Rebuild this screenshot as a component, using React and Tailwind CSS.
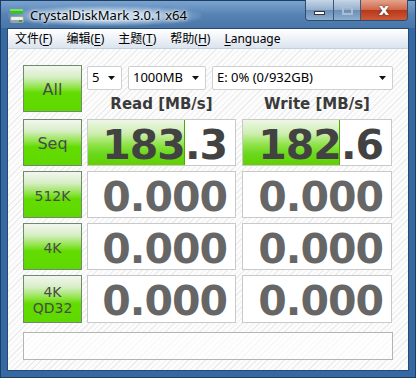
import React from "react";

const rows = [
  { label: ["Seq"], read: "183.3", write: "182.6", readBar: 97, writeBar: 97, big: true },
  { label: ["512K"], read: "0.000", write: "0.000" },
  { label: ["4K"], read: "0.000", write: "0.000" },
  { label: ["4K", "QD32"], read: "0.000", write: "0.000" },
];

const btnBg =
  "bg-[linear-gradient(to_bottom,#f4f6f0_0%,#d6eec4_25%,#8ee445_48%,#62dc00_60%,#5fd800_100%)]";

function TestButton({ lines, big, h = "h-[47px]" }) {
  return (
    <div
      className={`w-[59px] ${h} shrink-0 border border-[#6f8a6c] ${btnBg} flex flex-col items-center justify-center text-[#4a4a4a] leading-[16px] pt-[2px]`}
      style={{ fontFamily: '"DejaVu Sans", sans-serif' }}
    >
      {lines.map((l) => (
        <span key={l} className={big ? "text-[16px]" : "text-[14px]"}>
          {l}
        </span>
      ))}
    </div>
  );
}

function ValueBox({ value, bar, w, h = "h-[47px]" }) {
  return (
    <div className={`relative ${w} ${h} shrink-0 border border-[#c9c9c9] bg-white`}>
      {bar ? (
        <div
          className="absolute left-0 top-0 bottom-0 border-r border-[#4fa800] bg-[linear-gradient(to_bottom,#eef7e6_0%,#cdeeb0_30%,#8fe348_55%,#6ad81c_75%,#62d000_100%)]"
          style={{ width: bar }}
        />
      ) : null}
      <div
        className={`relative h-full flex items-center justify-end pr-[8px] pt-[4px] text-[41px] font-bold leading-[46px] tracking-[-1px] ${bar ? "text-[#424242]" : "text-[#666666]"}`}
        style={{ fontFamily: '"DejaVu Sans", sans-serif' }}
      >
        {value}
      </div>
    </div>
  );
}

function Select({ text, w }) {
  return (
    <div className={`${w} h-[24px] shrink-0 border border-[#cfcfcf] bg-white rounded-[2px] flex items-center justify-between pl-[4px] pr-[5px] text-[13px] text-black`}>
      <span>{text}</span>
      <svg width="8" height="5" viewBox="0 0 8 5">
        <path d="M0 0h7L3.5 4z" fill="#111" />
      </svg>
    </div>
  );
}

function DiskIcon() {
  return (
    <svg width="16" height="16" viewBox="0 0 16 16">
      <rect x="1" y="1" width="13" height="5" rx="1" fill="#3fbf2a" />
      <rect x="1" y="1" width="13" height="2" fill="#7ee060" />
      <rect x="1" y="8" width="14" height="7" rx="2" fill="#9aa3a8" />
      <rect x="2" y="9" width="12" height="3" rx="1" fill="#e9eef0" />
      <rect x="10" y="12" width="3" height="2" fill="#3fa020" />
    </svg>
  );
}

function Mnemonic({ pre, key1, post }) {
  return (
    <span>
      {pre}
      <span className="underline underline-offset-2">{key1}</span>
      {post}
    </span>
  );
}

export default function App() {
  return (
    <div
      className="w-[416px] h-[378px] border border-[#1e3d60] bg-[#3569a3] flex flex-col px-[6px] pb-[6px]"
      style={{ fontFamily: '"Noto Sans", "Noto Sans CJK SC", sans-serif' }}
    >
      {/* title bar */}
      <div className="h-[27px] -mx-[6px] px-[7px] flex items-start bg-[linear-gradient(to_bottom,#7aa3cf,#5783b4_50%,#4876a8)]">
        <div className="flex items-center gap-[5px] mt-[5px] px-[1px] bg-[radial-gradient(ellipse_at_center,rgba(210,228,245,0.85)_30%,rgba(210,228,245,0)_75%)] pr-[14px]">
          <DiskIcon />
          <span className="text-[13px] text-black [text-shadow:0_0_6px_#fff,0_0_3px_#fff]">
            CrystalDiskMark 3.0.1 x64
          </span>
        </div>
        <div className="ml-auto -mt-[1px] flex h-[21px] rounded-b-[4px] border border-t-0 border-[#2c4c70] overflow-hidden">
          <div className="w-[28px] flex items-center justify-center border-r border-[#39597d] bg-[linear-gradient(to_bottom,#c6d6e6,#93afcd_50%,#6c8eb4_51%,#8eaecf)]">
            <div className="w-[11px] h-[4px] bg-white border border-[#334] mt-[5px]" />
          </div>
          <div className="w-[27px] flex items-center justify-center border-r border-[#39597d] bg-[linear-gradient(to_bottom,#c6d6e6,#93afcd_50%,#6c8eb4_51%,#8eaecf)]">
            <div className="w-[11px] h-[9px] border-[2px] border-[#a9bdd3]" />
          </div>
          <div className="w-[46px] flex items-center justify-center bg-[linear-gradient(to_bottom,#e4a38c,#d0664a_50%,#b8381a_51%,#cc5a35)]">
            <span className="text-white font-bold text-[16px] leading-none [text-shadow:0_0_2px_#222]" style={{ fontFamily: '"DejaVu Sans", sans-serif' }}>
              x
            </span>
          </div>
        </div>
      </div>

      {/* client */}
      <div className="flex-1 border border-[#284a70] flex flex-col">
        <div className="h-[20px] flex items-center px-[7px] gap-[14px] text-[12px] text-black bg-[linear-gradient(to_bottom,#ffffff,#eef2f8_50%,#dbe3ee)] border-b border-[#c5d0de]">
          <Mnemonic pre="文件(" key1="F" post=")" />
          <Mnemonic pre="编辑(" key1="E" post=")" />
          <Mnemonic pre="主题(" key1="T" post=")" />
          <Mnemonic pre="帮助(" key1="H" post=")" />
          <Mnemonic pre="" key1="L" post="anguage" />
        </div>

        <div className="flex-1 pl-[15px] pt-[16px] flex flex-col gap-[5px] bg-[repeating-linear-gradient(135deg,#fcfcfc_0px,#fcfcfc_3px,#ededed_3px,#ededed_4px)]">
          <div className="flex gap-[5px]">
            <TestButton lines={["All"]} big />
            <div className="flex flex-col">
              <div className="flex gap-[6px] mt-[1px]">
                <Select text="5" w="w-[35px]" />
                <Select text="1000MB" w="w-[78px]" />
                <Select text="E: 0% (0/932GB)" w="w-[181px]" />
              </div>
              <div
                className="flex gap-[6px] text-[15px] font-bold text-[#3a3a3a] leading-[20px] mt-[4px]"
                style={{ fontFamily: '"DejaVu Sans", sans-serif' }}
              >
                <div className="w-[149px] text-center">Read [MB/s]</div>
                <div className="w-[150px] text-center">Write [MB/s]</div>
              </div>
            </div>
          </div>

          {rows.map((r, i) => {
            const h = i === 3 ? "h-[48px]" : "h-[47px]";
            return (
              <div key={i} className="flex gap-[5px]">
                <TestButton lines={r.label} big={r.big} h={h} />
                <div className="flex gap-[6px]">
                  <ValueBox value={r.read} bar={r.readBar} w="w-[149px]" h={h} />
                  <ValueBox value={r.write} bar={r.writeBar} w="w-[150px]" h={h} />
                </div>
              </div>
            );
          })}

          <div className="mt-[4px] w-[370px] h-[28px] border border-[#b4b4b4] bg-white/60" />
        </div>
      </div>
    </div>
  );
}
